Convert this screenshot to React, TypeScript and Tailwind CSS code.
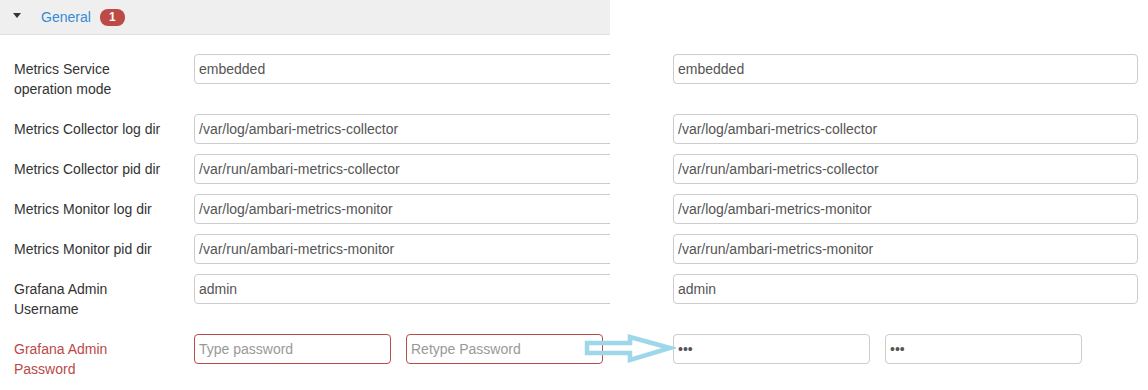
const rows = [
  { label: ["Metrics Service", "operation mode"], value: "embedded" },
  { label: ["Metrics Collector log dir"], value: "/var/log/ambari-metrics-collector" },
  { label: ["Metrics Collector pid dir"], value: "/var/run/ambari-metrics-collector" },
  { label: ["Metrics Monitor log dir"], value: "/var/log/ambari-metrics-monitor" },
  { label: ["Metrics Monitor pid dir"], value: "/var/run/ambari-metrics-monitor" },
  { label: ["Grafana Admin", "Username"], value: "admin" },
];

const font = { fontFamily: '"Liberation Sans", Arial, sans-serif' };

function TextBox({ value, placeholder, error, password, className }: {
  value?: string;
  placeholder?: string;
  error?: boolean;
  password?: boolean;
  className?: string;
}) {
  return (
    <input
      readOnly
      type={password ? "password" : "text"}
      value={value ?? ""}
      placeholder={placeholder}
      style={font}
      className={`h-[30px] rounded-[4px] border bg-white px-[4px] text-[14px] text-[#555] outline-none placeholder:text-[#999] ${
        error ? "border-[#b94a48]" : "border-[#ccc]"
      } ${className ?? ""}`}
    />
  );
}

export default function App() {
  return (
    <div className="relative flex h-[390px] w-[1148px] overflow-hidden bg-white text-[14px] text-[#333]" style={font}>
      {/* left: original values */}
      <div className="w-[610px] shrink-0 overflow-hidden">
        <div className="flex h-[35px] items-center border-b border-[#e0e0e0] bg-[#efefef] pl-[13px]">
          <span className="mb-[3px] h-0 w-0 border-x-[4px] border-t-[5px] border-x-transparent border-t-[#333]" />
          <span className="ml-[20px] text-[#348bd6]">General</span>
          <span className="ml-[9px] flex h-[17px] w-[25px] items-center justify-center rounded-[8px] bg-[#bc4a47] text-[12px] font-bold text-white">
            1
          </span>
        </div>
        <div className="pt-[19px]">
          {rows.map((r) => (
            <div key={r.value} className="mb-[10px] flex">
              <div className="w-[194px] shrink-0 py-[5px] pl-[14px] leading-5">
                {r.label.map((l) => (
                  <div key={l}>{l}</div>
                ))}
              </div>
              <TextBox value={r.value} className="w-[470px] shrink-0" />
            </div>
          ))}
          <div className="flex">
            <div className="w-[194px] shrink-0 py-[5px] pl-[14px] leading-5 text-[#b94a48]">
              <div>Grafana Admin</div>
              <div>Password</div>
            </div>
            <TextBox placeholder="Type password" error className="w-[197px]" />
            <TextBox placeholder="Retype Password" error className="ml-[15px] w-[197px]" />
          </div>
        </div>
      </div>

      {/* right: new values */}
      <div className="ml-[63px] w-[465px] shrink-0 pt-[54px]">
        {rows.map((r) => (
          <div key={r.value} className={r.label.length > 1 ? "h-[60px]" : "h-[40px]"}>
            <TextBox value={r.value} className="w-[465px]" />
          </div>
        ))}
        <div className="flex gap-[15px]">
          <TextBox value="abc" password className="w-[197px]" />
          <TextBox value="abc" password className="w-[197px]" />
        </div>
      </div>

      <svg className="absolute left-[580px] top-[330px]" width="96" height="36" viewBox="0 0 96 36">
        <path
          d="M7 13 H50 V7 L90 18 L50 30 V23 H7 Z"
          fill="none"
          stroke="#9dd7e9"
          strokeWidth="4.5"
          strokeLinejoin="miter"
        />
      </svg>
    </div>
  );
}
